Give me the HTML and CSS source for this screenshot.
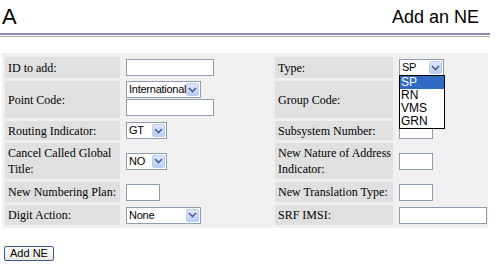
FILE: index.html
```html
<!DOCTYPE html>
<html>
  <head>
    <link rel="stylesheet" href="styles.css">
  </head>
  <body>
    <div class="header">
      <span class="logo">A</span>
      <span class="title">Add an NE</span>
    </div>
    <div class="rule"></div>
    <form id="neForm">
      <div class="form-grid">
        <div class="label">ID to add:</div>
        <div class="field"><input type="text" class="text w-long"></div>
        <div class="label">Type:</div>
        <div class="field">
          <div class="combo open w-type">
            <select><option>SP</option></select>
            <span class="arrow"><svg width="9" height="6" viewBox="0 0 9 6"><path d="M1 1 L4.5 4.5 L8 1" fill="none" stroke="#4d6185" stroke-width="1.6"/></svg></span>
            <ul class="dropdown">
              <li class="selected">SP</li>
              <li>RN</li>
              <li>VMS</li>
              <li>GRN</li>
            </ul>
          </div>
        </div>

        <div class="label">Point Code:</div>
        <div class="field stack">
          <div class="combo w-intl">
            <select><option>International</option></select>
            <span class="arrow"><svg width="9" height="6" viewBox="0 0 9 6"><path d="M1 1 L4.5 4.5 L8 1" fill="none" stroke="#4d6185" stroke-width="1.6"/></svg></span>
          </div>
          <input type="text" class="text w-long">
        </div>
        <div class="label">Group Code:</div>
        <div class="field"></div>

        <div class="label">Routing Indicator:</div>
        <div class="field">
          <div class="combo w-short">
            <select><option>GT</option></select>
            <span class="arrow"><svg width="9" height="6" viewBox="0 0 9 6"><path d="M1 1 L4.5 4.5 L8 1" fill="none" stroke="#4d6185" stroke-width="1.6"/></svg></span>
          </div>
        </div>
        <div class="label">Subsystem Number:</div>
        <div class="field"><input type="text" class="text w-tiny"></div>

        <div class="label">Cancel Called Global<br>Title:</div>
        <div class="field">
          <div class="combo w-short">
            <select><option>NO</option></select>
            <span class="arrow"><svg width="9" height="6" viewBox="0 0 9 6"><path d="M1 1 L4.5 4.5 L8 1" fill="none" stroke="#4d6185" stroke-width="1.6"/></svg></span>
          </div>
        </div>
        <div class="label">New Nature of Address<br>Indicator:</div>
        <div class="field"><input type="text" class="text w-tiny"></div>

        <div class="label">New Numbering Plan:</div>
        <div class="field"><input type="text" class="text w-tiny"></div>
        <div class="label">New Translation Type:</div>
        <div class="field"><input type="text" class="text w-tiny"></div>

        <div class="label">Digit Action:</div>
        <div class="field">
          <div class="combo w-intl">
            <select><option>None</option></select>
            <span class="arrow"><svg width="9" height="6" viewBox="0 0 9 6"><path d="M1 1 L4.5 4.5 L8 1" fill="none" stroke="#4d6185" stroke-width="1.6"/></svg></span>
          </div>
        </div>
        <div class="label">SRF IMSI:</div>
        <div class="field"><input type="text" class="text w-long"></div>
      </div>
      <div class="actions">
        <button type="submit" class="btn">Add NE</button>
      </div>
    </form>
  </body>
</html>
```

FILE: styles.css
```css
:root {
  --rule-color: #8a8ab8;
  --panel-bg: #f0f0f0;
  --label-bg: #e0e0e0;
  --input-border: #8e9cb0;
  --select-blue: #316ac5;
}

body {
  margin: 0;
  padding: 0 2px;
  background: #fff;
  font-family: "Liberation Sans", Arial, sans-serif;
  color: #000;
}

.header {
  display: flex;
  justify-content: space-between;
  align-items: flex-end;
  width: 477px;
  height: 28px;
  padding-right: 11px;
}

.logo {
  font-size: 22px;
  line-height: 22px;
}

.title {
  font-size: 18px;
  line-height: 18px;
  padding-bottom: 2px;
}

.rule {
  width: 490px;
  margin: 5px 0 0 -2px;
  height: 1px;
  border-top: 2px solid var(--rule-color);
  border-bottom: 1px solid #a8a8b8;
}

.form-grid {
  display: grid;
  grid-template-columns: 115px 149px 118px 90px;
  grid-template-rows: 21px 37px 19px 36px 20px 20px;
  gap: 3px;
  width: 480px;
  margin-top: 16px;
  padding: 4px 3px 3px 3px;
  background: var(--panel-bg);
}

.label {
  display: flex;
  align-items: center;
  padding: 0 2px 0 3px;
  background: var(--label-bg);
  font-family: "Liberation Serif", "Times New Roman", serif;
  font-size: 12px;
  line-height: 16px;
  white-space: nowrap;
}

.field {
  display: flex;
  align-items: center;
  padding-left: 3px;
}

.field.stack {
  flex-direction: column;
  align-items: flex-start;
  justify-content: flex-start;
  gap: 1px;
}

.text {
  box-sizing: border-box;
  height: 17px;
  margin: 0;
  padding: 0 2px;
  border: 1px solid var(--input-border);
  background: #fff;
  font-size: 11px;
}

.w-long { width: 88px; }
.w-tiny { width: 34px; }

.combo {
  position: relative;
  box-sizing: border-box;
  display: inline-flex;
  align-items: stretch;
  height: 17px;
  padding: 1px;
  border: 1px solid var(--input-border);
  background: #fff;
}

.w-intl { width: 75px; }
.w-short { width: 41px; }
.w-type { width: 45px; }

.combo select {
  flex: 1;
  min-width: 0;
  -webkit-appearance: none;
  appearance: none;
  border: none;
  outline: none;
  margin: 0;
  padding: 0 0 0 1px;
  background: transparent;
  font-family: "Liberation Sans", Arial, sans-serif;
  font-size: 11px;
  letter-spacing: -0.25px;
  line-height: 13px;
  color: #000;
}

.arrow {
  display: flex;
  align-items: center;
  justify-content: center;
  width: 13px;
  border: 1px solid #b9cbf3;
  border-radius: 2px;
  background: linear-gradient(#dde7fd, #bccdf6);
  box-sizing: border-box;
}

.dropdown {
  position: absolute;
  top: 15px;
  left: -1px;
  z-index: 2;
  width: 44px;
  margin: 0;
  padding: 0;
  list-style: none;
  border: 1px solid #000;
  background: #fff;
  font-size: 12px;
  line-height: 13px;
}

.dropdown li {
  padding-left: 1px;
}

.dropdown li.selected {
  background: var(--select-blue);
  color: #fff;
}

.actions {
  margin-top: 15px;
  padding-left: 2px;
}

.btn {
  height: 15px;
  width: 50px;
  padding: 0;
  border: 1px solid #3b5a8c;
  border-radius: 2px;
  background: linear-gradient(#fcfcfa, #ece9e0);
  font-family: "Liberation Sans", Arial, sans-serif;
  font-size: 11px;
  line-height: 13px;
  color: #000;
}
```
